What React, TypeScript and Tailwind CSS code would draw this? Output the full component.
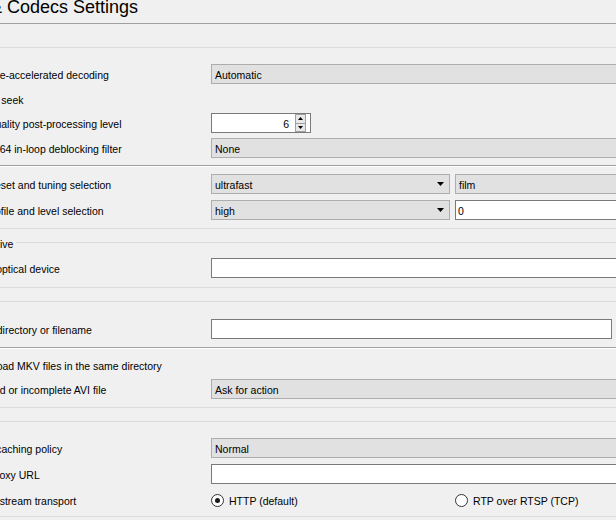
import React from "react";

// Input & Codecs simple preferences panel (cropped view)

function Combo({ text, className, arrow = false }: { text: string; className: string; arrow?: boolean }) {
  return (
    <div
      className={`flex h-[20px] shrink-0 items-center justify-between border border-[#adadad] bg-[#e1e1e1] pl-[3px] pr-[5px] ${className}`}
    >
      <span className="whitespace-nowrap pt-[3px]">{text}</span>
      {arrow && (
        <svg width="7" height="4" viewBox="0 0 7 4" className="shrink-0">
          <polygon points="0,0 7,0 3.5,4" fill="#000" />
        </svg>
      )}
    </div>
  );
}

function Edit({ value = "", className }: { value?: string; className: string }) {
  return (
    <div className={`flex h-[20px] shrink-0 items-center border border-[#7a7a7a] bg-white pl-[2px] ${className}`}>
      <span className="pt-[3px]">{value}</span>
    </div>
  );
}

function SpinBox({ value }: { value: string }) {
  return (
    <div className="flex h-[20px] w-[100px] shrink-0 items-center border border-[#7a7a7a] bg-white">
      <span className="flex-1 pr-[6px] pt-[3px] text-right">{value}</span>
      <div className="mr-[4px] flex h-[18px] w-[11px] flex-col border border-[#a0a0a0] bg-[#e8e8e8]">
        <div className="flex flex-1 items-center justify-center border-b border-[#a0a0a0]">
          <svg width="5" height="3" viewBox="0 0 5 3">
            <polygon points="2.5,0 5,3 0,3" fill="#000" />
          </svg>
        </div>
        <div className="flex flex-1 items-center justify-center">
          <svg width="5" height="3" viewBox="0 0 5 3">
            <polygon points="0,0 5,0 2.5,3" fill="#000" />
          </svg>
        </div>
      </div>
    </div>
  );
}

function Row({ label, children, className = "" }: { label: React.ReactNode; children: React.ReactNode; className?: string }) {
  return (
    <div className={`-ml-[40px] flex h-[20px] shrink-0 items-center ${className}`}>
      <div className="w-[251px] shrink-0 whitespace-nowrap pt-[3px]">{label}</div>
      <div className="flex shrink-0 items-center">{children}</div>
    </div>
  );
}

function CheckRow({ label, className = "" }: { label: string; className?: string }) {
  return (
    <div className={`-ml-[40px] flex h-[20px] shrink-0 items-center whitespace-nowrap ${className}`}>
      <span className="mr-[5px] h-[13px] w-[13px] shrink-0 border border-[#333] bg-white" />
      <span className="pt-[3px]">{label}</span>
    </div>
  );
}

function Light({ className }: { className: string }) {
  return <div className={`h-px w-[700px] shrink-0 bg-[#dcdcdc] ${className}`} />;
}

function Sunken({ className }: { className: string }) {
  return (
    <div className={`w-[700px] shrink-0 ${className}`}>
      <div className="h-px bg-[#a0a0a0]" />
      <div className="h-px bg-white" />
    </div>
  );
}

function Radio({ label, checked }: { label: string; checked?: boolean }) {
  return (
    <div className="flex items-center whitespace-nowrap">
      <span className="flex h-[13px] w-[13px] shrink-0 items-center justify-center rounded-full border border-[#333] bg-white">
        {checked && <span className="h-[5px] w-[5px] rounded-full bg-[#1a1a1a]" />}
      </span>
      <span className="ml-[5px] pt-[3px]">{label}</span>
    </div>
  );
}

export default function App() {
  return (
    <div className="flex h-[520px] w-[616px] flex-col overflow-hidden bg-[#f0f0f0] font-['Liberation_Sans',Arial,sans-serif] text-[10.5px] text-black">
      {/* header */}
      <div className="h-[23px] shrink-0">
        <div className="-ml-[55px] -mt-[2px] whitespace-nowrap text-[18px] leading-[18px]">Input &amp; Codecs Settings</div>
      </div>
      <div className="h-px w-[700px] shrink-0 bg-[#a0a0a0]" />

      {/* Codecs */}
      <Light className="mt-[23px]" />
      <Row label="Hardware-accelerated decoding" className="mt-[16px]">
        <Combo text="Automatic" className="w-[500px]" />
      </Row>
      <CheckRow label="Fast seek" className="mt-[5px]" />
      <Row label="Video quality post-processing level" className="mt-[4px]">
        <SpinBox value="6" />
      </Row>
      <Row label="Skip H.264 in-loop deblocking filter" className="mt-[5px]">
        <Combo text="None" className="w-[500px]" />
      </Row>
      <Sunken className="mt-[7px]" />
      <Row label="x264 preset and tuning selection" className="mt-[7px]">
        <Combo text="ultrafast" arrow className="w-[239px]" />
        <Combo text="film" className="ml-[5px] w-[300px]" />
      </Row>
      <Row label="x264 profile and level selection" className="mt-[6px]">
        <Combo text="high" arrow className="w-[239px]" />
        <Edit value="0" className="ml-[5px] w-[300px]" />
      </Row>
      <Light className="mt-[8px]" />

      {/* Optical drive */}
      <div className="-ml-[45px] mt-[8px] flex h-[11px] shrink-0 items-center">
        <span className="whitespace-nowrap pt-[3px] leading-[11px]">Optical drive</span>
        <div className="ml-[3px] h-px w-[700px] shrink-0 bg-[#dcdcdc]" />
      </div>
      <Row label="Default optical device" className="mt-[10px]">
        <Edit className="w-[500px]" />
      </Row>
      <Light className="mt-[9px]" />

      {/* Files */}
      <Light className="mt-[13px]" />
      <Row label="Record directory or filename" className="mt-[17px]">
        <Edit className="w-[401px]" />
      </Row>
      <Sunken className="mt-[8px]" />
      <CheckRow label="Preload MKV files in the same directory" className="mt-[6px]" />
      <Row label="Damaged or incomplete AVI file" className="mt-[4px]">
        <Combo text="Ask for action" className="w-[500px]" />
      </Row>
      <Light className="mt-[8px]" />

      {/* Network */}
      <Light className="mt-[13px]" />
      <Row label="Default caching policy" className="mt-[16px]">
        <Combo text="Normal" className="w-[500px]" />
      </Row>
      <Row label="HTTP proxy URL" className="mt-[6px]">
        <Edit className="w-[500px]" />
      </Row>
      <Row label="Live555 stream transport" className="mt-[6px]">
        <div className="w-[244px] shrink-0">
          <Radio label="HTTP (default)" checked />
        </div>
        <Radio label="RTP over RTSP (TCP)" />
      </Row>
      <Light className="mt-[6px]" />
    </div>
  );
}
